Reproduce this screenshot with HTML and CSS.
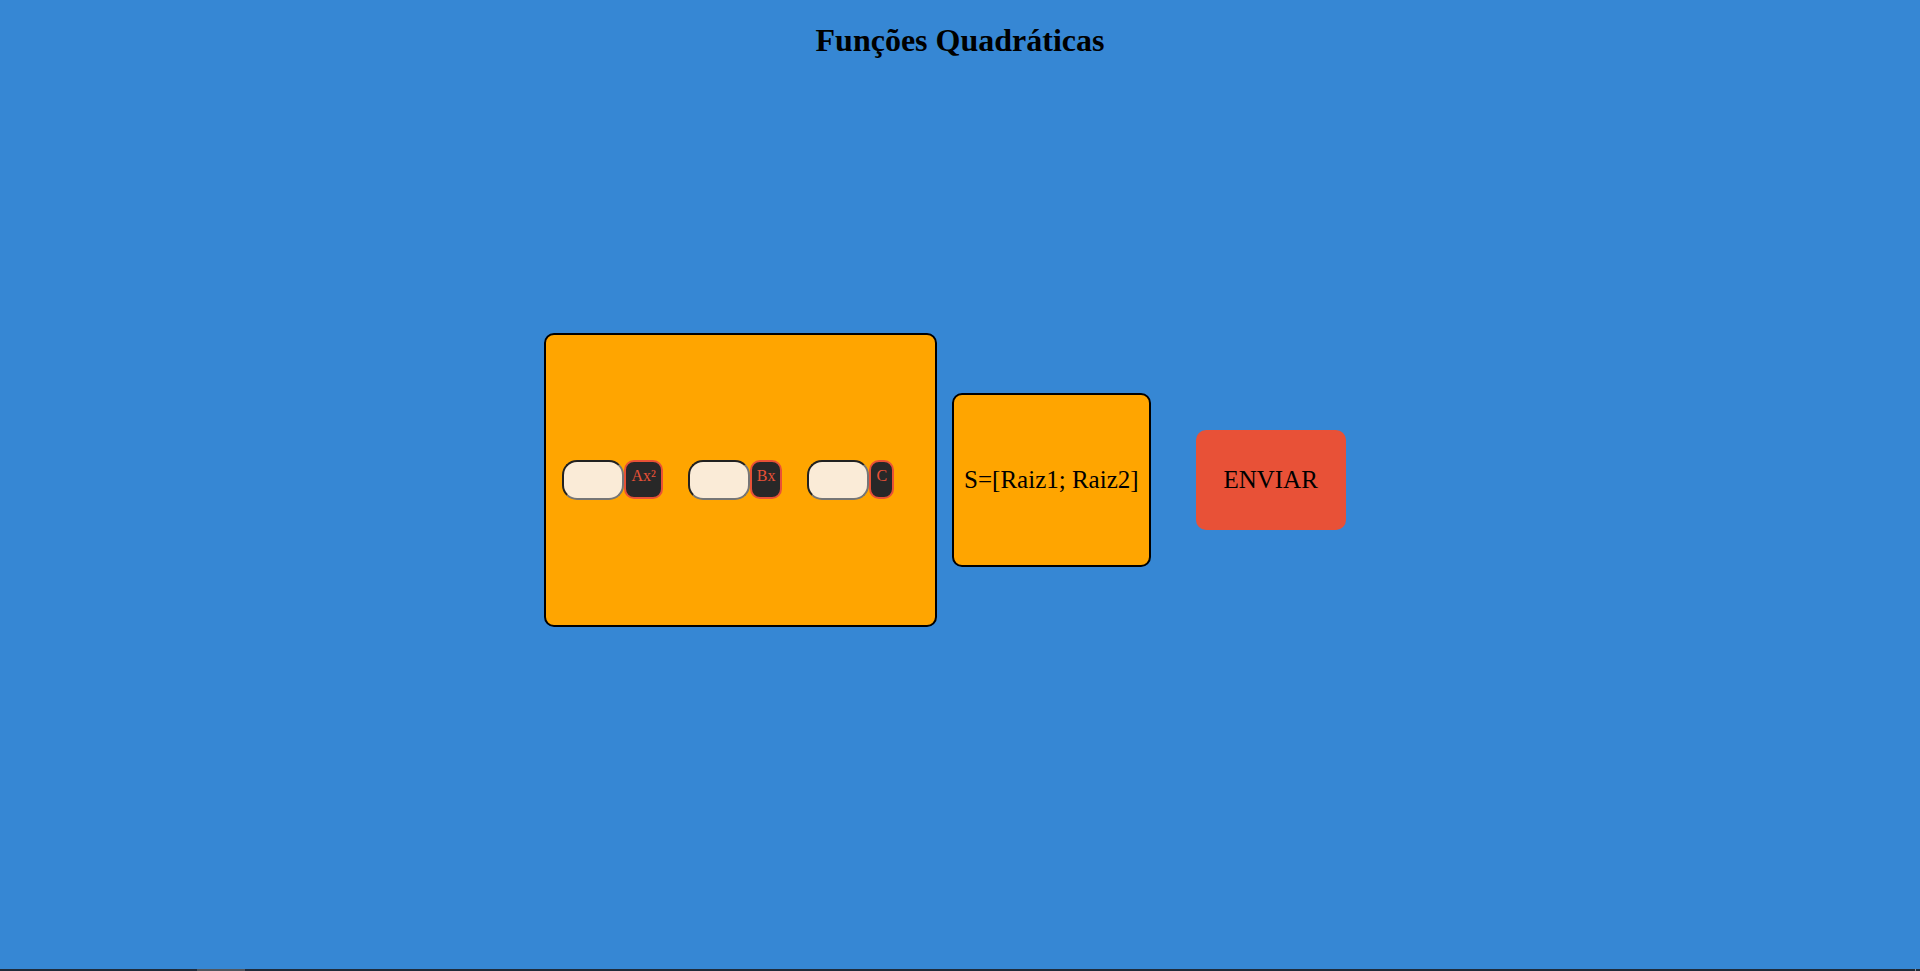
FILE: index.html
```html
<!DOCTYPE html>
<html lang="pt-BR">
<head>
<meta charset="utf-8">
<meta name="viewport" content="width=device-width, initial-scale=1">
<title>Funções Quadráticas</title>
<link rel="stylesheet" href="styles.css">
</head>
<body>
<div class="page">
  <h1 class="title">Funções Quadráticas</h1>
  <form class="calculator">
    <div class="card coefficients">
      <div class="field">
        <input class="field-input" id="a" type="text">
        <label class="field-label" for="a">Ax²</label>
      </div>
      <div class="field">
        <input class="field-input" id="b" type="text">
        <label class="field-label" for="b">Bx</label>
      </div>
      <div class="field">
        <input class="field-input" id="c" type="text">
        <label class="field-label" for="c">C</label>
      </div>
    </div>
    <output class="card result" for="a b c">S=[Raiz1; Raiz2]</output>
    <button class="submit" type="button">ENVIAR</button>
  </form>
</div>
<footer class="strip">
  <div class="strip-active"></div>
  <div class="strip-tick"></div>
</footer>
</body>
</html>
```
FILE: styles.css
```css
* {
  box-sizing: border-box;
}

body {
  margin: 0;
  background: #3687d4;
  color: #000;
  font-family: "Liberation Serif", "Times New Roman", serif;
}

.page {
  display: grid;
  grid-template-rows: 1fr auto 1fr;
  min-height: calc(100vh - 2px);
  padding-bottom: 9px;
}

.title {
  margin: 22px 0;
  font-size: 32px;
  line-height: 37px;
  text-align: center;
}

.calculator {
  display: flex;
  align-items: center;
  justify-content: center;
  gap: 15px;
}

.card {
  display: flex;
  align-items: center;
  border: 2px solid #000;
  border-radius: 10px;
  background: orange;
}

.coefficients {
  min-height: 294px;
  padding: 16px;
}

.field {
  display: flex;
  align-items: flex-start;
  margin-right: 25px;
}

.field-input {
  width: 62px;
  height: 40px;
  padding: 1px 10px;
  border: 2px inset #767676;
  border-radius: 15px;
  background: antiquewhite;
  font: inherit;
}

.field-label {
  min-height: 39px;
  padding: 5px;
  border: 2px solid #e85137;
  border-radius: 10px;
  background: #282828;
  color: #e85137;
  font-size: 16px;
  line-height: 18px;
}

.result {
  min-height: 174px;
  padding: 10px;
  font-size: 25px;
}

.submit {
  width: 150px;
  height: 100px;
  margin: 0 30px;
  border: 0;
  border-radius: 10px;
  background: #e85137;
  color: #000;
  font-family: inherit;
  font-size: 25px;
}

.strip {
  display: flex;
  justify-content: space-between;
  height: 2px;
  padding: 0 4px 0 197px;
  background: #1f2b3a;
}

.strip-active {
  width: 48px;
  background: #50565e;
}

.strip-tick {
  width: 1px;
  background: #8a9098;
}
```
